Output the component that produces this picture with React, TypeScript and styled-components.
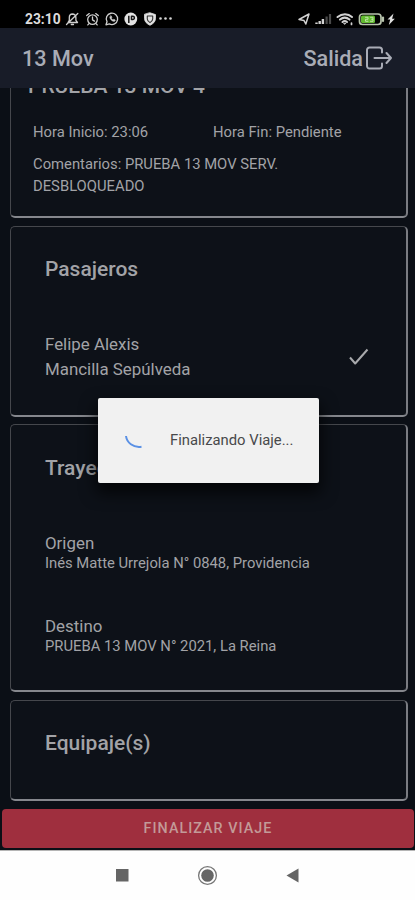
import React from 'react';
import styled, { createGlobalStyle } from 'styled-components';

const Global = createGlobalStyle`
  * { box-sizing: border-box; }
  body { margin: 0; background: #0b0f16; font-family: Roboto, sans-serif; }
`;

const Screen = styled.div`
  position: relative;
  width: 415px;
  height: 900px;
  display: flex;
  flex-direction: column;
  overflow: hidden;
  background: #0b0f16;
  color: #a2a3a7;
`;

const StatusBar = styled.div`
  height: 28px;
  flex: none;
  display: flex;
  align-items: center;
  justify-content: space-between;
  padding: 9px 18px 0 25px;
  background: #000;
  color: #dcdcdc;
  svg { display: block; }
`;

const StatusGroup = styled.div<{ $gap: number }>`
  display: flex;
  align-items: center;
  gap: ${p => p.$gap}px;
`;

const Clock = styled.span`
  font-size: 13.8px;
  font-weight: 700;
  line-height: 18px;
  width: 35px;
  white-space: nowrap;
`;

const Header = styled.header`
  height: 60px;
  flex: none;
  display: flex;
  align-items: center;
  justify-content: space-between;
  padding: 0 23px 0 22px;
  background: #181c28;
  color: #a9acb6;
  font-size: 21.6px;
  font-weight: 500;
`;

const Exit = styled.div`
  display: flex;
  align-items: center;
  gap: 3px;
`;

const Content = styled.main`
  flex: 1;
  min-height: 0;
  padding: 0 7px 0 10px;
  display: flex;
  flex-direction: column;
  gap: 8px;
  overflow: hidden;
`;

const Card = styled.section<{ $height: number; $cut?: boolean; $lift?: number }>`
  height: ${p => p.$height}px;
  flex: none;
  margin-top: ${p => -(p.$lift || 0)}px;
  padding: ${p => (p.$cut ? '0 22px' : `${30 + (p.$lift || 0)}px 34px 0`)};
  border: solid;
  border-width: ${p => (p.$cut ? '0' : '1px')} 2px 2px 1px;
  border-color: #45474c #7a7c82 #85878d #45474c;
  border-radius: ${p => (p.$cut ? '0 0 5px 5px' : '5px')};
  background: #0d1118;
`;

const Title = styled.h2<{ $cut?: boolean }>`
  margin: ${p => (p.$cut ? '-14px 0 0 -5px' : '0')};
  font-size: 21px;
  line-height: 24px;
  font-weight: 500;
  white-space: nowrap;
`;

const Times = styled.div`
  display: grid;
  grid-template-columns: 180px 1fr;
  margin-top: 23px;
`;

const Detail = styled.p<{ $gap?: number; $line?: number }>`
  margin: ${p => p.$gap || 0}px 0 0;
  font-size: 14.8px;
  line-height: ${p => p.$line || 22}px;
  white-space: nowrap;
`;

const Passenger = styled.div`
  display: flex;
  align-items: center;
  justify-content: space-between;
  margin-top: 50.5px;
  padding-right: 3px;
`;

const Name = styled.div`
  font-size: 16.9px;
  line-height: 25.5px;
`;

const Stop = styled.div<{ $gap: number }>`
  margin-top: ${p => p.$gap}px;
`;

const StopLabel = styled.div`
  font-size: 16.9px;
  line-height: 22px;
`;

const Finish = styled.button`
  height: 39px;
  flex: none;
  margin: 0 1px 2px 2px;
  padding: 0 0 1px;
  border: 0;
  border-radius: 4px;
  background: #9f2f3e;
  color: #c39a98;
  font: 500 14.3px Roboto, sans-serif;
  letter-spacing: 1.05px;
`;

const NavBar = styled.nav`
  height: 50px;
  flex: none;
  background: #fefefe;
  border-top: 1px solid #b5b5b5;
  display: flex;
  justify-content: center;
  svg { display: block; }
`;

const Dialog = styled.div`
  position: absolute;
  left: 98px;
  top: 398px;
  width: 221px;
  height: 85px;
  display: flex;
  align-items: center;
  padding: 0 0 1px 26px;
  gap: 26px;
  border-radius: 2px;
  background: #f1f1f1;
  color: #48494b;
  font-size: 14.8px;
  white-space: nowrap;
  box-shadow: 0 8px 16px 2px rgba(0, 0, 0, 0.7);
`;

const LeftStatusIcons = () => (
  <svg width="109" height="16" viewBox="0 0 109 16" fill="none" stroke="#cfcfcf" strokeWidth="1.3" strokeLinecap="round" strokeLinejoin="round">
    <path d="M3 11.5h9.5l-1.6-2.2V6.5A3.4 3.4 0 0 0 7.500 3a3.400 3.400 0 0 0-3.200 3.500v2.800L3 11.500M6.300 13.500h2.200M1.500 13.500L12.800 2.500" />
    <circle cx="27.500" cy="8.600" r="4.800" />
    <path d="M27.500 6v2.900l2 1.200M21.700 4.600l2.600-2M33.300 4.600l-2.600-2M24 12.600l-1.200 1.300M31 12.600l1.200 1.300" />
    <path d="M41 13.800l1-3.100a5.700 5.700 0 1 1 2.300 2.200z" />
    <path d="M44.900 5.700c-.6 2 2.500 5.100 4.700 4.600l.7-1.300-1.500-.8-.8.700-1.700-1.700.6-.9-.7-1.400z" fill="#cfcfcf" strokeWidth=".6" />
    <circle cx="65.800" cy="8" r="6.400" fill="#e2e2e2" stroke="none" />
    <path d="M63.800 12V4.800M66.500 5.200h1.300a1.600 1.600 0 0 1 0 3.200h-1.300z" stroke="#161616" strokeWidth="1.500" strokeLinecap="butt" />
    <path d="M85 1.800l5.500 1.800v4c0 3-2.300 5.200-5.500 6.700-3.200-1.500-5.500-3.700-5.500-6.700v-4z" fill="#e2e2e2" stroke="#e2e2e2" strokeWidth=".8" />
    <path d="M82.300 5h5.400v3c0 1.500-1.200 2.700-2.700 3.600-1.500-.9-2.700-2.100-2.700-3.600z" stroke="#333" strokeWidth="1.100" />
    <g fill="#d5d5d5" stroke="none">
      <circle cx="95.500" cy="7.500" r="1.300" /><circle cx="100.500" cy="7.500" r="1.300" /><circle cx="105.500" cy="7.500" r="1.300" />
    </g>
  </svg>
);

const RightStatusIcons = () => (
  <svg width="99" height="16" viewBox="0 0 99 16" fill="none" stroke="#d2d2d2" strokeLinecap="round" strokeLinejoin="round">
    <path d="M1 8.500L11 3 7.800 13 6 9.500z" strokeWidth="1.500" />
    <path d="M18.500 13v-1.500M21.700 13v-3M24.900 13V8" strokeWidth="2.400" strokeLinecap="butt" />
    <path d="M28.600 13V5.500M32 13V3" stroke="#4a4a4a" strokeWidth="2.200" strokeLinecap="butt" />
    <path d="M39.500 6c4.600-3.700 10.500-3.700 14.500 0M42 8.600c3-2.500 6.500-2.500 9.500 0M44.500 11c1.600-1.300 3-1.300 4.500 0" strokeWidth="2" />
    <path d="M45.800 12.100h2.200l-1.100 1.200z" fill="#d2d2d2" strokeWidth=".7" />
    <path d="M53.500 12v1.500" strokeWidth="1.700" />
    <rect x="61.500" y="3" width="21.500" height="10.500" rx="3" stroke="#b8c4ad" strokeWidth="1.700" />
    <rect x="63" y="4.500" width="14" height="7.500" rx="1.500" fill="#62bb30" stroke="none" />
    <path d="M67.500 6.300h2.500v2h-2.500v2h2.500M72.500 6.300h2.500v2h-1.500H75v2h-2.500" stroke="#bce3a4" strokeWidth="1" />
    <path d="M85 6.500v3.500" stroke="#b8c4ad" strokeWidth="2.200" />
    <path d="M95.500 2.500l-6 6h2.700L90.800 14l6-6.300h-2.700z" fill="#e0e0e0" stroke="none" />
  </svg>
);

const ExitIcon = () => (
  <svg width="26" height="24" viewBox="0 0 26 24" fill="none" stroke="#a9acb6" strokeWidth="2" strokeLinecap="round" strokeLinejoin="round">
    <path d="M16 6.500V4a2.500 2.500 0 0 0-2.500-2.500h-10A2.500 2.500 0 0 0 1 4v16a2.500 2.500 0 0 0 2.500 2.500h10A2.500 2.500 0 0 0 16 20v-2.500M8.500 12H25M20.500 7L25 12l-4.500 5" />
  </svg>
);

const CheckIcon = () => (
  <svg width="20" height="18" viewBox="0 0 20 18" fill="none" stroke="#a8a9ac" strokeWidth="2" strokeLinejoin="round">
    <path d="M1 9.500l5.200 6L18.500 1.500" />
  </svg>
);

const Spinner = () => (
  <svg width="20" height="20" viewBox="0 0 20 20" fill="none" stroke="#5b91e5" strokeWidth="2">
    <path d="M2 6c.8 6.500 7 12 15.500 10.700" />
  </svg>
);

const NavIcons = () => (
  <svg width="415" height="49" viewBox="0 0 415 49" fill="#656565">
    <rect x="116" y="18" width="12.500" height="12.500" />
    <circle cx="207.500" cy="24.500" r="6.300" />
    <circle cx="207.500" cy="24.500" r="8.900" fill="none" stroke="#777" strokeWidth="1.300" />
    <path d="M286.500 24.500l12-7v14z" />
  </svg>
);

export default function App() {
  return (
    <Screen>
      <Global />
      <StatusBar>
        <StatusGroup $gap={5}>
          <Clock>23:10</Clock>
          <LeftStatusIcons />
        </StatusGroup>
        <RightStatusIcons />
      </StatusBar>
      <Header>
        <span>13 Mov</span>
        <Exit>Salida<ExitIcon /></Exit>
      </Header>
      <Content>
        <Card $height={130} $cut>
          <Title $cut>PRUEBA 13 MOV 4</Title>
          <Times>
            <Detail>Hora Inicio: 23:06</Detail>
            <Detail>Hora Fin: Pendiente</Detail>
          </Times>
          <Detail $gap={10}>Comentarios: PRUEBA 13 MOV SERV.<br />DESBLOQUEADO</Detail>
        </Card>
        <Card $height={191}>
          <Title>Pasajeros</Title>
          <Passenger>
            <Name>Felipe Alexis<br />Mancilla Sepúlveda</Name>
            <CheckIcon />
          </Passenger>
        </Card>
        <Card $height={268} $lift={1}>
          <Title>Trayecto</Title>
          <Stop $gap={52}>
            <StopLabel>Origen</StopLabel>
            <Detail $line={19}>Inés Matte Urrejola N° 0848, Providencia</Detail>
          </Stop>
          <Stop $gap={42}>
            <StopLabel>Destino</StopLabel>
            <Detail $line={19}>PRUEBA 13 MOV N° 2021, La Reina</Detail>
          </Stop>
        </Card>
        <Card $height={101}>
          <Title>Equipaje(s)</Title>
        </Card>
      </Content>
      <Finish>FINALIZAR VIAJE</Finish>
      <NavBar><NavIcons /></NavBar>
      <Dialog>
        <Spinner />
        <span>Finalizando Viaje...</span>
      </Dialog>
    </Screen>
  );
}
